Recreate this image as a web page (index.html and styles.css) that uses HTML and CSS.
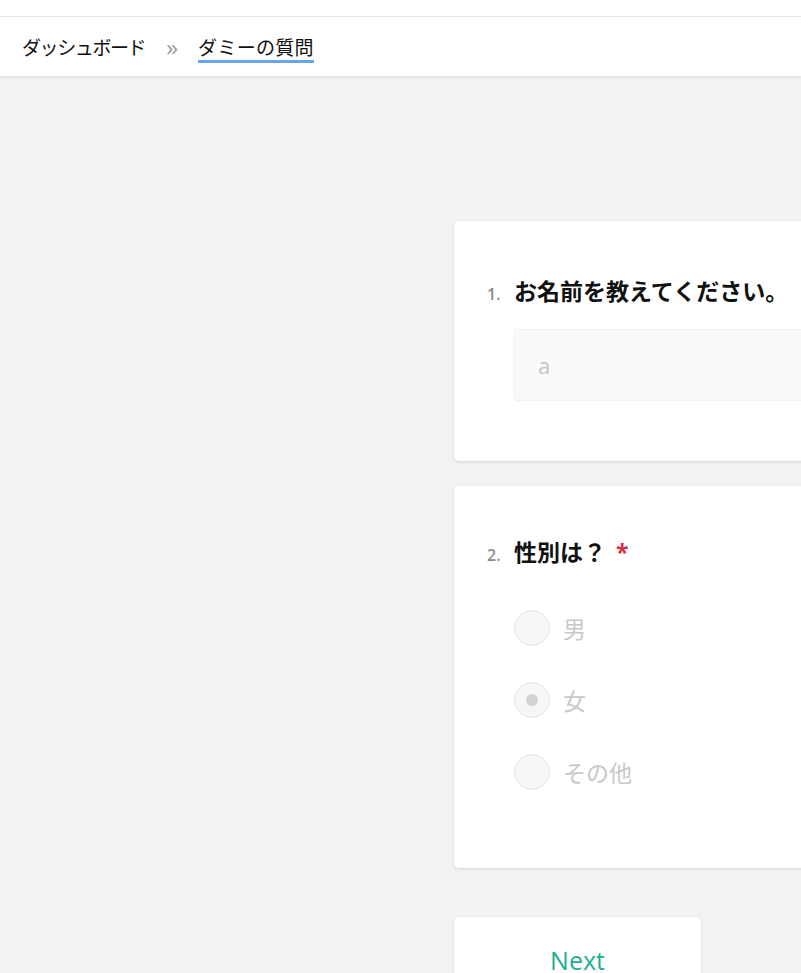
FILE: index.html
```html
<!DOCTYPE html>
<html lang="ja">
<head>
    <meta charset="UTF-8">
    <meta name="viewport" content="width=device-width, initial-scale=1.0">
    <title>ダミーの質問</title>
    <link rel="stylesheet" href="styles.css">
</head>
<body>
    <div class="topline"></div>
    <nav class="breadcrumb">
        <a class="crumb">ダッシュボード</a>
        <span class="sep">»</span>
        <a class="crumb current">ダミーの質問</a>
    </nav>

    <div class="main">
        <div class="panel">
            <div class="card q-text">
                <div class="q-title">
                    <span class="num">1.</span>
                    <span class="label">お名前を教えてください。</span>
                </div>
                <input class="text-input" type="text" placeholder="a" disabled>
            </div>

            <div class="card q-radio">
                <div class="q-title">
                    <span class="num">2.</span>
                    <span class="label">性別は？</span>
                    <span class="required">*</span>
                </div>
                <div class="options">
                    <label class="option"><span class="radio"></span>男</label>
                    <label class="option"><span class="radio checked"></span>女</label>
                    <label class="option"><span class="radio"></span>その他</label>
                </div>
            </div>

            <div class="card next-card">
                <button class="next">Next</button>
            </div>
        </div>
    </div>
</body>
</html>
```

FILE: styles.css
```css
html, body {
    margin: 0;
    overflow: hidden;
}
body {
    background-color: #f2f3f5;
    font-family: "Noto Sans CJK JP", "Open Sans", sans-serif;
    color: #1a1a1a;
    height: 973px;
}
.topline {
    height: 16px;
    background-color: #fff;
    border-bottom: 1px solid #e4e4e4;
}
.breadcrumb {
    height: 59px;
    background-color: #fff;
    display: flex;
    align-items: center;
    padding-left: 22px;
    box-shadow: 0 2px 3px rgba(0, 0, 0, 0.08);
    position: relative;
}
.crumb {
    font-size: 19px;
    color: #111;
    line-height: 28px;
    letter-spacing: -1.4px;
}
.crumb.current {
    border-bottom: 3px solid #67a3ee;
    line-height: 26px;
    margin-top: 4px;
    letter-spacing: 0.3px;
}
.sep {
    font-family: "Open Sans", sans-serif;
    color: #9a9a9a;
    font-size: 24px;
    margin: 0 20px 0 21px;
}
.main {
    padding: 73px 0 0 22px;
}
.panel {
    background-color: #f2f2f2;
    padding: 72px 0 0 432px;
    height: 900px;
    display: flex;
    flex-direction: column;
    align-items: flex-start;
}
.card {
    background-color: #fff;
    border-radius: 5px;
    box-shadow: 0 1px 3px rgba(0, 0, 0, 0.12);
    width: 600px;
    box-sizing: border-box;
}
.q-text {
    height: 240px;
    padding: 55px 0 0 33px;
}
.q-radio {
    height: 382px;
    padding: 51px 0 0 33px;
    margin-top: 25px;
}
.q-title {
    display: flex;
    align-items: baseline;
    line-height: 28px;
}
.num {
    font-family: "Open Sans", sans-serif;
    font-size: 16px;
    font-weight: 600;
    color: #8c8c8c;
    width: 27px;
}
.label {
    font-size: 23px;
    font-weight: bold;
    color: #111;
}
.required {
    font-family: "Open Sans", sans-serif;
    color: #d9303e;
    font-size: 23px;
    font-weight: bold;
    margin-left: 10px;
}
.text-input {
    display: block;
    margin: 21px 0 0 27px;
    width: 400px;
    height: 72px;
    box-sizing: border-box;
    background-color: #fafafa;
    border: 1px solid #f1f1f1;
    border-radius: 4px;
    padding: 0 23px;
    font-family: "Open Sans", sans-serif;
    font-size: 22px;
}
.text-input::placeholder {
    color: #c4c4c4;
}
.options {
    margin: 41px 0 0 27px;
    display: flex;
    flex-direction: column;
    gap: 36px;
}
.option {
    display: flex;
    align-items: center;
    gap: 13px;
    font-size: 23px;
    color: #c8c8c8;
    height: 36px;
}
.radio {
    width: 34px;
    height: 34px;
    border-radius: 50%;
    background-color: #f6f6f6;
    border: 1px solid #e6e6e6;
    display: flex;
    align-items: center;
    justify-content: center;
}
.radio.checked::after {
    content: "";
    width: 12px;
    height: 12px;
    border-radius: 50%;
    background-color: #d2d2d2;
}
.next-card {
    width: 247px;
    margin-top: 49px;
    height: 80px;
    display: flex;
    justify-content: center;
    padding-top: 30px;
}
.next {
    background: none;
    border: none;
    font-family: "Open Sans", sans-serif;
    font-size: 25px;
    color: #1fae94;
    height: 26px;
    padding: 0;
    line-height: 26px;
}
```
